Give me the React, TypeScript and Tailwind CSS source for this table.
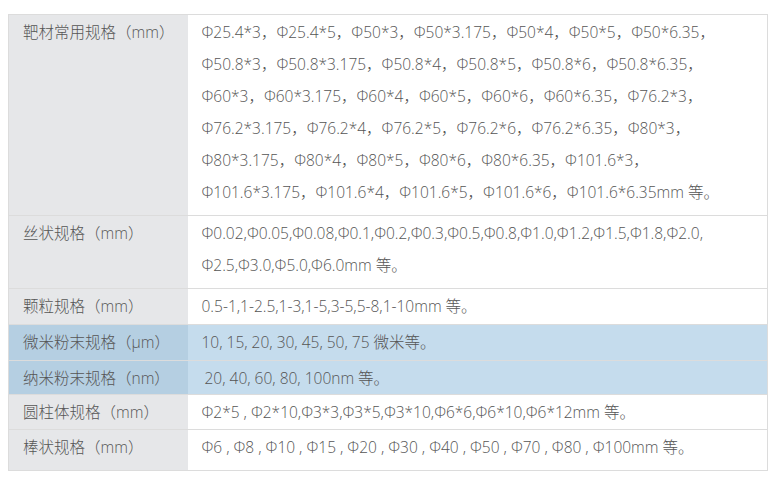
const rows: { label: string; lines: string[]; hl?: boolean; h: string; pl?: string }[] = [
  {
    label: "靶材常用规格（mm）",
    lines: [
      "Φ25.4*3，Φ25.4*5，Φ50*3，Φ50*3.175，Φ50*4，Φ50*5，Φ50*6.35，",
      "Φ50.8*3，Φ50.8*3.175，Φ50.8*4，Φ50.8*5，Φ50.8*6，Φ50.8*6.35，",
      "Φ60*3，Φ60*3.175，Φ60*4，Φ60*5，Φ60*6，Φ60*6.35，Φ76.2*3，",
      "Φ76.2*3.175，Φ76.2*4，Φ76.2*5，Φ76.2*6，Φ76.2*6.35，Φ80*3，",
      "Φ80*3.175，Φ80*4，Φ80*5，Φ80*6，Φ80*6.35，Φ101.6*3，",
      "Φ101.6*3.175，Φ101.6*4，Φ101.6*5，Φ101.6*6，Φ101.6*6.35mm 等。",
    ],
    h: "h-[201px]",
  },
  {
    label: "丝状规格（mm）",
    lines: [
      "Φ0.02,Φ0.05,Φ0.08,Φ0.1,Φ0.2,Φ0.3,Φ0.5,Φ0.8,Φ1.0,Φ1.2,Φ1.5,Φ1.8,Φ2.0,",
      "Φ2.5,Φ3.0,Φ5.0,Φ6.0mm 等。",
    ],
    h: "h-[73px]",
  },
  { label: "颗粒规格（mm）", lines: ["0.5-1,1-2.5,1-3,1-5,3-5,5-8,1-10mm 等。"], h: "h-[36px]" },
  { label: "微米粉末规格（μm）", lines: ["10, 15, 20, 30, 45, 50, 75 微米等。"], hl: true, h: "h-[36px]" },
  { label: "纳米粉末规格（nm）", lines: ["20, 40, 60, 80, 100nm 等。"], hl: true, h: "h-[34px]", pl: "pl-[17px]" },
  { label: "圆柱体规格（mm）", lines: ["Φ2*5 , Φ2*10,Φ3*3,Φ3*5,Φ3*10,Φ6*6,Φ6*10,Φ6*12mm 等。"], h: "h-[35px]" },
  {
    label: "棒状规格（mm）",
    lines: ["Φ6 , Φ8 , Φ10 , Φ15 , Φ20 , Φ30 , Φ40 , Φ50 , Φ70 , Φ80 , Φ100mm 等。"],
    h: "h-[41px]",
  },
];

export default function App() {
  return (
    <div
      className="w-[777px] h-[484px] bg-white pt-[14px] pl-[8px]"
      style={{ fontFamily: '"Open Sans", "Noto Sans CJK SC", sans-serif' }}
    >
      <table className="w-[760px] border-collapse text-[15.5px] font-light text-[#555]">
        <tbody>
          {rows.map((r) => (
            <tr key={r.label} className={`${r.h} border border-[#dcdcdc]`}>
              <td
                className={`w-[179px] align-top pl-[14px] pt-[1px] leading-[32px] whitespace-nowrap ${
                  r.hl ? "bg-[#b5cfe2]" : "bg-[#e6e7e9]"
                }`}
              >
                {r.label}
              </td>
              <td
                className={`align-top pt-[1px] leading-[32px] whitespace-nowrap ${r.pl ?? "pl-[14px]"} ${
                  r.hl ? "bg-[#c5dced]" : "bg-white"
                }`}
              >
                {r.lines.map((l) => (
                  <div key={l}>{l}</div>
                ))}
              </td>
            </tr>
          ))}
        </tbody>
      </table>
    </div>
  );
}
